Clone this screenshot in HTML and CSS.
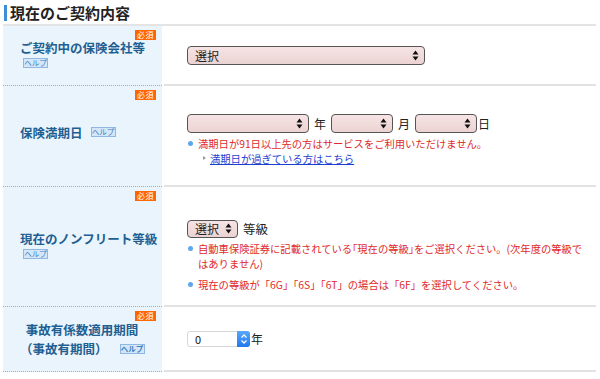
FILE: index.html
```html
<!DOCTYPE html>
<html lang="ja">
<head>
    <meta charset="UTF-8">
    <meta name="viewport" content="width=device-width, initial-scale=1.0">
    <title>現在のご契約内容</title>
    <link rel="stylesheet" href="styles.css">
</head>
<body>
    <main class="page">
        <!-- Section title -->
        <h2 class="sec_title">現在のご契約内容</h2>

        <div class="form_tbl">
            <!-- Insurance company -->
            <div class="row row_1">
                <div class="lbl">
                    <span class="must">必須</span>
                    <div class="lbl_in">
                        <div class="lbl_txt">ご契約中の保険会社等</div>
                        <span class="help">ヘルプ</span>
                    </div>
                </div>
                <div class="val val_1">
                    <div class="sel sel_wide">
                        <span>選択</span>
                        <svg class="arr" width="7" height="11" viewBox="0 0 7 11"><path d="M3.5 0.5 L6.5 4.5 L0.5 4.5 Z M0.5 6.5 L6.5 6.5 L3.5 10.5 Z" fill="#111"/></svg>
                    </div>
                </div>
            </div>

            <!-- Expiry date -->
            <div class="row row_2">
                <div class="lbl">
                    <span class="must">必須</span>
                    <div class="lbl_inline">
                        <div class="lbl_txt">保険満期日</div>
                        <span class="help">ヘルプ</span>
                    </div>
                </div>
                <div class="val val_2">
                    <div class="date_line">
                        <div class="sel sel_year">
                            <span></span>
                            <svg class="arr" width="7" height="11" viewBox="0 0 7 11"><path d="M3.5 0.5 L6.5 4.5 L0.5 4.5 Z M0.5 6.5 L6.5 6.5 L3.5 10.5 Z" fill="#111"/></svg>
                        </div>
                        <span class="unit">年</span>
                        <div class="sel sel_md">
                            <span></span>
                            <svg class="arr" width="7" height="11" viewBox="0 0 7 11"><path d="M3.5 0.5 L6.5 4.5 L0.5 4.5 Z M0.5 6.5 L6.5 6.5 L3.5 10.5 Z" fill="#111"/></svg>
                        </div>
                        <span class="unit">月</span>
                        <div class="sel sel_md">
                            <span></span>
                            <svg class="arr" width="7" height="11" viewBox="0 0 7 11"><path d="M3.5 0.5 L6.5 4.5 L0.5 4.5 Z M0.5 6.5 L6.5 6.5 L3.5 10.5 Z" fill="#111"/></svg>
                        </div>
                        <span class="unit unit_tight">日</span>
                    </div>
                    <ul class="notes">
                        <li>満期日が91日以上先の方はサービスをご利用いただけません。</li>
                    </ul>
                    <p class="sub_link"><a href="#">満期日が過ぎている方はこちら</a></p>
                </div>
            </div>

            <!-- Non-fleet grade -->
            <div class="row row_3">
                <div class="lbl">
                    <span class="must">必須</span>
                    <div class="lbl_in">
                        <div class="lbl_txt">現在のノンフリート等級</div>
                        <span class="help">ヘルプ</span>
                    </div>
                </div>
                <div class="val val_3">
                    <div class="date_line">
                        <div class="sel sel_grade">
                            <span>選択</span>
                            <svg class="arr" width="7" height="11" viewBox="0 0 7 11"><path d="M3.5 0.5 L6.5 4.5 L0.5 4.5 Z M0.5 6.5 L6.5 6.5 L3.5 10.5 Z" fill="#111"/></svg>
                        </div>
                        <span class="unit unit_grade">等級</span>
                    </div>
                    <ul class="notes">
                        <li>自動車保険証券に記載されている｢現在の等級｣をご選択ください。(次年度の等級ではありません)</li>
                        <li>現在の等級が「6G」「6S」「6T」の場合は「6F」を選択してください。</li>
                    </ul>
                </div>
            </div>

            <!-- Accident coefficient period -->
            <div class="row row_4">
                <div class="lbl">
                    <span class="must">必須</span>
                    <div class="lbl_center">
                        <div class="lbl_txt">事故有係数適用期間</div>
                        <div class="lbl_txt">（事故有期間）<span class="help help_inline">ヘルプ</span></div>
                    </div>
                </div>
                <div class="val val_4">
                    <div class="date_line">
                        <div class="num">
                            <span>0</span>
                            <span class="spin">
                                <svg width="8" height="12" viewBox="0 0 8 12"><path d="M1.5 4.5 L4 2 L6.5 4.5 M1.5 7.5 L4 10 L6.5 7.5" fill="none" stroke="#fff" stroke-width="1.3"/></svg>
                            </span>
                        </div>
                        <span class="unit unit_tight">年</span>
                    </div>
                </div>
            </div>
        </div>
    </main>
</body>
</html>
```

FILE: styles.css
```css
/* Base page */
body {
    margin: 0;
    background-color: #fff;
    font-family: "Noto Sans CJK JP", "Noto Sans", sans-serif;
    color: #333;
}
.page {
    padding: 0 4px 0 3px;
}
/* Section heading with blue bar */
.sec_title {
    margin: 0;
    height: 24px;
    display: flex;
    align-items: center;
    font-size: 15px;
    font-weight: bold;
    line-height: 15px;
    color: #222;
    padding-left: 1px;
}
.sec_title::before {
    content: "";
    width: 3px;
    height: 16px;
    background-color: #3c8fd6;
    margin-right: 3px;
    margin-top: 1px;
}
/* Form table */
.form_tbl {
    border-top: 2px solid #e4e4e4;
}
.row {
    display: flex;
}
.row_1 { min-height: 60px; }
.row_2 { min-height: 101px; }
.row_3 { min-height: 120px; }
.row_4 { min-height: 65px; }

.lbl {
    position: relative;
    width: 159px;
    flex-shrink: 0;
    background-color: #eaf4fc;
    border-bottom: 1px dotted #aaa;
    margin-right: 2px;
    display: flex;
    align-items: center;
    padding-left: 17px;
    box-sizing: border-box;
}
.val {
    flex: 1;
    border-bottom: 2px solid #e2e2e2;
    display: flex;
    flex-direction: column;
    padding-left: 23px;
}
.val_1,
.val_4 {
    justify-content: center;
}
.val_2 { padding-top: 28px; }
.val_3 { padding-top: 32px; }

/* Required badge */
.must {
    position: absolute;
    top: 4px;
    right: 6px;
    background-color: #ff6500;
    color: #fff;
    font-size: 8px;
    line-height: 10px;
    padding: 0 2px;
    letter-spacing: 0.5px;
}
/* Label text */
.lbl_in {
    display: flex;
    flex-direction: column;
    align-items: flex-start;
    gap: 2px;
    margin-bottom: 4px;
}
.lbl_inline {
    display: flex;
    align-items: center;
    gap: 8px;
    margin-bottom: 8px;
}
.lbl_center {
    text-align: center;
    width: 124px;
}
.lbl_txt {
    font-size: 12.5px;
    font-weight: bold;
    color: #1f5f92;
    line-height: 17px;
    white-space: nowrap;
}
.lbl_center .lbl_txt {
    line-height: 19px;
}
/* Help badge */
.help {
    display: inline-block;
    margin-left: 3px;
    font-size: 7.5px;
    line-height: 8px;
    width: 23px;
    text-align: center;
    color: #3a7fc4;
    background-color: #d4e7f8;
    border: 1px solid #8fb7df;
}
.lbl_inline .help {
    margin: 0;
}
.help_inline {
    margin: 0 0 0 12px;
    vertical-align: 2px;
}
/* Pseudo select boxes */
.sel {
    height: 19px;
    box-sizing: border-box;
    border: 1px solid #555;
    border-radius: 4px;
    background: linear-gradient(#f6e4e4, #ecd3d3);
    display: flex;
    align-items: center;
    justify-content: space-between;
    padding: 0 5px 0 7px;
    font-size: 12px;
    color: #222;
}
.sel_wide { width: 238px; }
.sel_year { width: 122px; }
.sel_md { width: 62px; }
.sel_grade { width: 51px; height: 18px; }
.arr {
    flex-shrink: 0;
}
.date_line {
    display: flex;
    align-items: center;
}
.unit {
    font-size: 12px;
    color: #222;
    margin: 0 5px;
}
.unit_grade {
    font-size: 12.5px;
}
.unit_tight {
    margin: 0 0 0 1px;
}
/* Notes */
.notes {
    list-style: none;
    margin: 3px 0 0;
    padding: 0;
}
.notes li {
    position: relative;
    padding-left: 11px;
    font-size: 10.3px;
    line-height: 15px;
    color: #e02a2a;
    margin-bottom: 6px;
    padding-right: 8px;
}
.notes li::before {
    content: "";
    position: absolute;
    left: 1px;
    top: 5px;
    width: 5px;
    height: 5px;
    border-radius: 50%;
    background-color: #5fa6ea;
}
.val_2 .notes li { margin-bottom: 0; }
.sub_link {
    margin: 0;
    padding-left: 23px;
    position: relative;
    font-size: 10.3px;
    line-height: 15px;
}
.sub_link::before {
    content: "";
    position: absolute;
    left: 16px;
    top: 5px;
    border-left: 3px solid #999;
    border-top: 2px solid transparent;
    border-bottom: 2px solid transparent;
}
.sub_link a {
    color: #1d3fcf;
}
/* Number input */
.num {
    width: 63px;
    height: 16px;
    box-sizing: border-box;
    border: 1px solid #d6d6d6;
    border-radius: 3px;
    display: flex;
    align-items: center;
    justify-content: space-between;
    padding-left: 7px;
    font-size: 11px;
    color: #111;
    background-color: #fff;
}
.spin {
    width: 13px;
    height: 16px;
    margin-right: -1px;
    background: linear-gradient(#5aa7fb, #1f78f0);
    border-radius: 0 3px 3px 0;
    display: flex;
    align-items: center;
    justify-content: center;
}
```
